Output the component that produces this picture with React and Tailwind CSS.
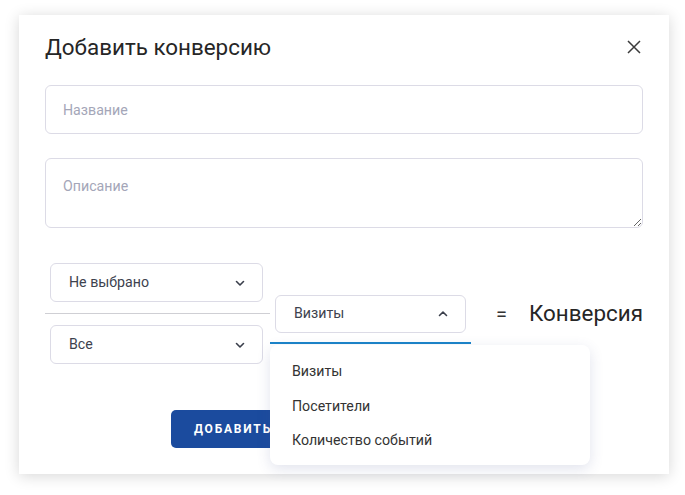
import React from 'react';

const Chevron = ({ up }) => (
  <svg width="12" height="12" viewBox="0 0 12 12" fill="none" className={up ? 'rotate-180' : ''}>
    <path d="M2.5 4.5 L6 8 L9.5 4.5" stroke="#3a3f4b" strokeWidth="1.6" strokeLinecap="round" strokeLinejoin="round" />
  </svg>
);

const Select = ({ value, up, className }) => (
  <div
    className={`flex items-center justify-between border border-[#dcdbe6] rounded-md bg-white pl-[18px] pr-[16px] text-[14.2px] text-[#3d424e] ${className}`}
  >
    <span>{value}</span>
    <Chevron up={up} />
  </div>
);

const App = () => {
  const options = ['Визиты', 'Посетители', 'Количество событий'];

  return (
    <div className="w-[685px] h-[495px] bg-white pt-[15px] pl-[19px]" style={{ fontFamily: 'Roboto, "Liberation Sans", sans-serif' }}>
      <div className="w-[650px] h-[459px] bg-white shadow-[0_2px_14px_rgba(0,0,0,0.16)] px-[26px] pt-[17px]">
        <div className="flex items-center justify-between h-[30px]">
          <h2 className="text-[22.4px] text-[#262626] font-normal leading-none">Добавить конверсию</h2>
          <svg width="16" height="16" viewBox="0 0 16 16" className="mr-[1px]">
            <path d="M2 2 L14 14 M14 2 L2 14" stroke="#3b3b3b" strokeWidth="1.5" />
          </svg>
        </div>

        <input
          placeholder="Название"
          className="mt-[23px] block w-full h-[49px] border border-[#dcdbe6] rounded-md px-[17px] text-[14.2px] placeholder-[#a4a6b8] outline-none"
        />
        <textarea
          placeholder="Описание"
          className="mt-[24px] block w-full h-[70px] border border-[#dcdbe6] rounded-md px-[17px] pt-[17px] text-[14.2px] placeholder-[#a4a6b8] outline-none"
        />

        <div className="mt-[35px] flex items-start">
          <div className="w-[225px] shrink-0 flex flex-col">
            <Select value="Не выбрано" className="ml-[5px] w-[213px] h-[39px]" />
            <div className="my-[11px] h-px bg-[#cfcfd4]" />
            <Select value="Все" className="ml-[5px] w-[213px] h-[39px]" />
          </div>

          <div className="relative w-[201px] shrink-0 mt-[32px]">
            <Select value="Визиты" up className="mx-[5px] h-[38px]" />
            <div className="mt-[9px] h-[2px] bg-[#1b84c9]" />
            <div className="absolute left-0 top-[50px] w-[320px] h-[120px] bg-white rounded-lg shadow-[0_4px_14px_rgba(70,80,140,0.16)] z-10 pt-[15px]">
              {options.map((o) => (
                <div key={o} className="h-[34.5px] pl-[22px] text-[14.2px] text-[#333333] leading-[22px]">
                  {o}
                </div>
              ))}
            </div>
          </div>

          <div className="flex items-center mt-[32px] h-[38px] whitespace-nowrap">
            <span className="ml-[25px] text-[20px] text-[#333]">=</span>
            <span className="ml-[22px] text-[22.4px] text-[#262626]">Конверсия</span>
          </div>
        </div>

        <div className="mt-[46px] pl-[126px]">
          <button className="h-[38px] w-[190px] rounded-[5px] bg-[#1b4b9e] text-white text-[12px] font-bold tracking-[0.15em] text-left pl-[23px]">
            ДОБАВИТЬ
          </button>
        </div>
      </div>
    </div>
  );
};

export default App;
